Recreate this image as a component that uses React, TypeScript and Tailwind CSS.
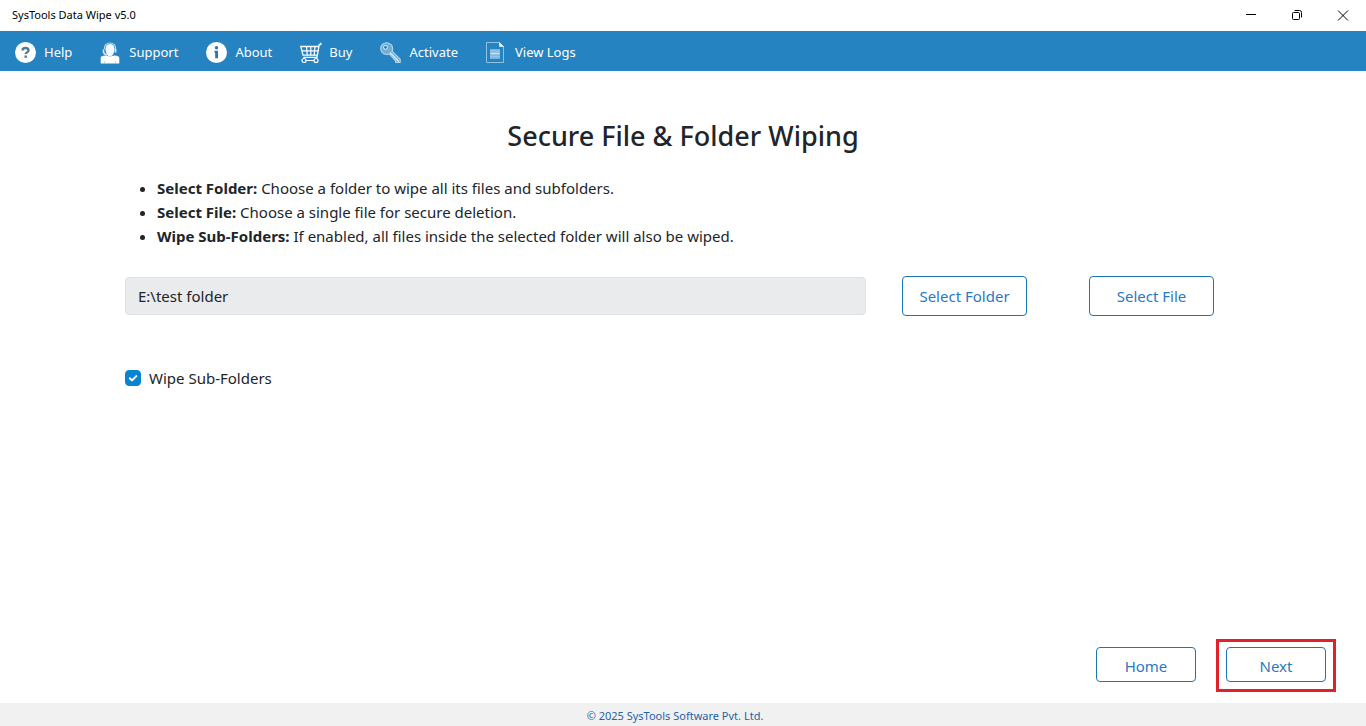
import { useState } from "react";

const HelpIcon = () => (
  <svg viewBox="0 0 22 22" className="size-[22px]" aria-hidden="true">
    <circle cx="10.5" cy="10.5" r="10.5" fill="#fff" />
    <path d="M7.500 8.600c0-1.700 1.200-2.600 3-2.600s3 .9 3 2.400c0 2-2.800 1.900-2.800 3.700" fill="none" stroke="#4c7899" strokeWidth="2.300" />
    <rect x="9.500" y="13.500" width="2.400" height="2.300" fill="#4c7899" />
  </svg>
);

const SupportIcon = () => (
  <svg viewBox="0 0 22 22" className="size-[22px]" aria-hidden="true">
    <path d="M.7 21.500V16c0-1.500 1.500-2.300 5-2.500l4.300 1 4.300-1c3.500.2 5 1 5 2.500v5.500z" fill="#fff" />
    <path d="M5.500 6.500c0-3 1.700-4.500 4.500-4.500s4.500 1.500 4.500 4.500c0 4-1.800 8-4.500 8s-4.500-4-4.500-8z" fill="#fff" fillOpacity="0.950" />
    <path d="M4.200 7.500c0-4.300 2-6.500 5.800-6.500s5.800 2.200 5.800 6.500" fill="none" stroke="#b9d9ec" strokeWidth="1.200" />
    <path d="M3.500 7.500v3c.8 1.500 2 2.200 4 2.500" fill="none" stroke="#d5e7f3" strokeWidth="1.600" />
    <path d="M15.500 7v3.500" stroke="#d5e7f3" strokeWidth="1.800" />
    <path d="M4.500 21.500v-2M15.500 21.500v-2" stroke="#8fc0e0" strokeWidth="0.800" />
  </svg>
);

const AboutIcon = () => (
  <svg viewBox="0 0 22 22" className="size-[22px]" aria-hidden="true">
    <circle cx="10.5" cy="10.5" r="10.5" fill="#fff" />
    <circle cx="10.5" cy="5.700" r="1.700" fill="#2d76aa" />
    <path d="M8.500 8.800h3.500v7.400H9.200v-5.500h-.7z" fill="#2d76aa" />
  </svg>
);

const CartIcon = () => (
  <svg viewBox="0 0 22 22" className="size-[22px]" fill="none" stroke="#fff" aria-hidden="true">
    <path d="M20.800 .8v1.700h-1.500L17 15.300H3.500" strokeWidth="1.300" />
    <path d="M19 4.500H.8l2.200 8.700h14.200" strokeWidth="1.300" />
    <path d="M2 8.800h16M6.500 4.500l.8 8.700M10.800 4.500v8.700M15 4.500l-.8 8.700" strokeWidth="1.200" />
    <circle cx="4" cy="18.500" r="2" strokeWidth="1.200" />
    <circle cx="16" cy="18.500" r="2" strokeWidth="1.200" />
    <path d="M6 18.500h8M4 15.300v1.200M16 15.300v1.200" strokeWidth="1.200" />
  </svg>
);

const KeyIcon = () => (
  <svg viewBox="0 0 22 22" className="size-[22px]" aria-hidden="true">
    <path
      d="M6.500.8C3.300.8.700 3.300.700 6.500s2.600 6 5.800 6c1.100 0 2-.2 2.800-.5l6.200 6.800.2 1.700h4.500v-3.200l-8-8c.3-.9.5-1.800.5-2.800C12.700 3.300 9.700.8 6.500.8z"
      fill="#fff"
      fillOpacity="0.350"
      stroke="#b5d5ea"
      strokeWidth="1.100"
    />
    <circle cx="5.500" cy="5.300" r="2" fill="#2483c0" stroke="#e2eef6" />
    <path d="M10 10.500l8.700 9" stroke="#e2eef6" strokeWidth="1.200" />
  </svg>
);

const LogIcon = () => (
  <svg viewBox="0 0 22 22" className="size-[22px]" aria-hidden="true">
    <path d="M.5.5h13l4 4v16H.5z" fill="none" stroke="#8fc2e2" />
    <path d="M13.500.5v4h4z" fill="#eff6fa" stroke="#cfe3f0" />
    <rect x="4" y="7" width="10" height="10" fill="#7eb5da" />
    <path d="M4 9h10M4 14.500h10" stroke="#97c4e1" strokeWidth="1.500" />
    <path d="M4.500 11.500h9" stroke="#cfe3f0" strokeWidth="1.500" />
  </svg>
);

const navItems = [
  { label: "Help", Icon: HelpIcon },
  { label: "Support", Icon: SupportIcon },
  { label: "About", Icon: AboutIcon },
  { label: "Buy", Icon: CartIcon },
  { label: "Activate", Icon: KeyIcon },
  { label: "View Logs", Icon: LogIcon },
];

const outlineButton =
  "rounded-[4px] border border-[#1c76b4] bg-white text-[15px] text-[#2b78bf] hover:bg-[#eef6fb]";

const TitleBar = () => (
  <header className="flex h-[31px] items-center justify-between bg-white pl-3">
    <span className="text-[11px] text-black">SysTools Data Wipe v5.0</span>
    <div className="flex h-full">
      <button type="button" aria-label="Minimize" className="flex w-[46px] items-center justify-center">
        <svg viewBox="0 0 12 12" className="size-3" stroke="#000" aria-hidden="true">
          <path d="M1 4.500h10" />
        </svg>
      </button>
      <button type="button" aria-label="Restore" className="flex w-[46px] items-center justify-center">
        <svg viewBox="0 0 12 12" className="size-3" fill="none" stroke="#000" aria-hidden="true">
          <rect x="1.500" y="2.500" width="7" height="7" rx="1" />
          <path d="M3.500.5h5a2 2 0 0 1 2 2v5" />
        </svg>
      </button>
      <button type="button" aria-label="Close" className="flex w-[46px] items-center justify-center">
        <svg viewBox="0 0 12 12" className="size-3" stroke="#000" aria-hidden="true">
          <path d="M1 .5l10 10M11 .5L1 10.500" />
        </svg>
      </button>
    </div>
  </header>
);

const NavBar = () => (
  <nav className="flex h-10 items-center gap-7 bg-[#2483c0] px-[15px] pt-[3px]">
    {navItems.map(({ label, Icon }) => (
      <a key={label} href="#" className="flex items-center gap-[7px] text-[13px] text-white">
        <Icon />
        {label}
      </a>
    ))}
  </nav>
);

export default function App() {
  const [wipeSubFolders, setWipeSubFolders] = useState(true);

  return (
    <div className="flex min-h-screen flex-col bg-white font-['Noto_Sans','Open_Sans',sans-serif] text-[#212529]">
      <TitleBar />
      <NavBar />

      <main className="flex flex-1 flex-col">
        <h1 className="mt-[47px] text-center text-[27px] font-medium leading-9">Secure File &amp; Folder Wiping</h1>

        <div className="pl-[125px] pr-[152px]">
          <ul className="mt-[22px] list-disc pl-8 text-[15px] leading-6">
            <li><b>Select Folder:</b> Choose a folder to wipe all its files and subfolders.</li>
            <li><b>Select File:</b> Choose a single file for secure deletion.</li>
            <li><b>Wipe Sub-Folders:</b> If enabled, all files inside the selected folder will also be wiped.</li>
          </ul>

          <div className="mt-7 flex items-center">
            <input
              type="text"
              aria-label="Selected path"
              readOnly
              value={"E:\\test folder"}
              className="h-[38px] min-w-0 flex-1 rounded-[4px] border border-[#dfe2e5] bg-[#e9ebed] px-3 text-[15px] outline-none"
            />
            <button type="button" className={`${outlineButton} ml-9 h-10 w-[125px]`}>Select Folder</button>
            <button type="button" className={`${outlineButton} ml-[62px] h-10 w-[125px]`}>Select File</button>
          </div>

          <label className="mt-[50px] inline-flex items-center gap-2 text-[15px] leading-6">
            <span className="relative flex size-4">
              <input
                type="checkbox"
                checked={wipeSubFolders}
                onChange={(e) => setWipeSubFolders(e.target.checked)}
                className="peer size-4 appearance-none rounded-[4px] border border-[#adb5bd] checked:border-[#0a84d0] checked:bg-[#0a84d0]"
              />
              <svg
                viewBox="0 0 16 16"
                className="pointer-events-none absolute inset-0 hidden size-4 peer-checked:block"
                fill="none"
                stroke="#fff"
                strokeWidth="2"
                strokeLinecap="round"
                strokeLinejoin="round"
                aria-hidden="true"
              >
                <path d="M4.800 8.200l2.200 2.200 4.300-4.300" />
              </svg>
            </span>
            Wipe Sub-Folders
          </label>
        </div>

        <div className="mb-[11px] mr-[30px] mt-auto flex justify-end gap-5">
          <div className="pt-2">
            <button type="button" className={`${outlineButton} h-[35px] w-[100px] pt-[3px]`}>Home</button>
          </div>
          <div className="border-3 border-[#e0222b] px-[7px] pb-[7px] pt-[5px]">
            <button type="button" className={`${outlineButton} h-[35px] w-[100px] pt-[3px]`}>Next</button>
          </div>
        </div>
      </main>

      <footer className="flex h-[23px] items-center justify-center bg-[#f1f1f1] pr-4 pt-[3px] text-[11px]">
        <a href="#" className="text-[#1f62a5]">© 2025 SysTools Software Pvt. Ltd.</a>
      </footer>
    </div>
  );
}
